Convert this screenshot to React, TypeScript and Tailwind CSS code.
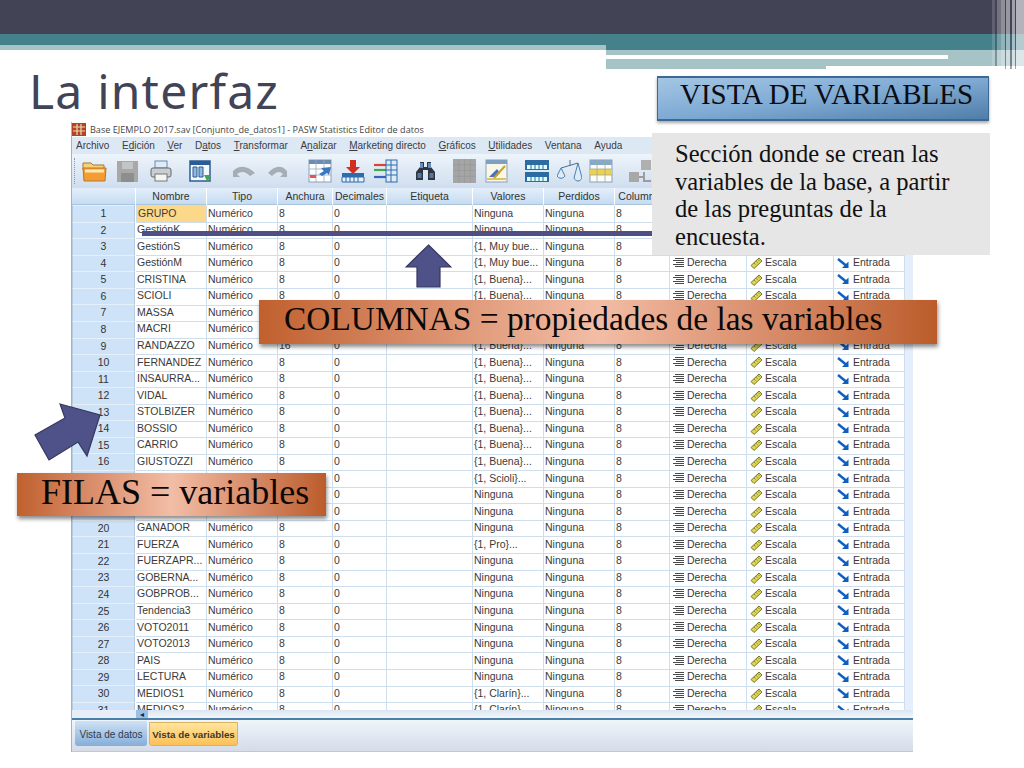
import React from "react";

const names = ["GRUPO","GestiónK","GestiónS","GestiónM","CRISTINA","SCIOLI","MASSA","MACRI","RANDAZZO","FERNANDEZ","INSAURRA...","VIDAL","STOLBIZER","BOSSIO","CARRIO","GIUSTOZZI","","","","GANADOR","FUERZA","FUERZAPR...","GOBERNA...","GOBPROB...","Tendencia3","VOTO2011","VOTO2013","PAIS","LECTURA","MEDIOS1","MEDIOS2"];
const vals = (i: number) => {
  const n = i + 1;
  if (n === 3 || n === 4) return "{1, Muy bue...";
  if (n >= 5 && n <= 16) return "{1, Buena}...";
  if (n === 17) return "{1, Scioli}...";
  if (n === 21) return "{1, Pro}...";
  if (n === 30 || n === 31) return "{1, Clarín}...";
  return "Ninguna";
};
const cols = "grid grid-cols-[64px_71px_71px_55px_54px_86px_71px_71px_55px_77px_87px_71px]";
const cell = "flex items-center pl-[1px] border-r border-b border-[#cfdeec] overflow-hidden whitespace-nowrap";

const AlignIcon = () => (
  <svg width="13" height="10" viewBox="0 0 13 10" className="ml-[1px] mr-[2px] shrink-0">
    <path d="M3 .5h9M1 2.5h11M4 4.5h8M1 6.5h11M3 8.5h9" stroke="#4a4a4a" strokeWidth="1" />
  </svg>
);
const RulerIcon = () => (
  <svg width="13" height="12" viewBox="0 0 13 12" className="mr-[2px] shrink-0">
    <path d="M1 8.5 9 1l3 3-8 7.5z" fill="#e2d255" stroke="#6f7a2a" strokeWidth="1" />
    <path d="M4 6l1.5 1.5M6 4.2l1.5 1.5M8 2.5 9.5 4" stroke="#6f7a2a" strokeWidth=".8" />
  </svg>
);
const RoleIcon = () => (
  <svg width="13" height="11" viewBox="0 0 13 11" className="mr-[3px] shrink-0">
    <path d="M1 1l8 6.5" stroke="#0f5fc0" strokeWidth="2.4" />
    <path d="M11.5 3.5v6.5H5z" fill="#0f5fc0" />
  </svg>
);

const Row = ({ i }: { i: number }) => (
  <div className={`${cols} h-[16.57px] text-[10.5px] text-[#3a3a3a]`}>
    <div className="flex items-center justify-center h-full bg-[#cfe3f8] border border-[#b5cbe0] border-t-[#e6f0fa] mr-[1px] text-[#333]">{i + 1}</div>
    <div className={`${cell} ${i === 0 ? "bg-[#fcd98a] border border-[#5a5aa0]" : ""}`}>{names[i]}</div>
    <div className={cell}>Numérico</div>
    <div className={cell}>{i === 8 ? "16" : "8"}</div>
    <div className={cell}>0</div>
    <div className={cell}></div>
    <div className={cell}>{vals(i)}</div>
    <div className={cell}>Ninguna</div>
    <div className={cell}>8</div>
    <div className={cell}><AlignIcon />Derecha</div>
    <div className={`${cell} pl-[3px]`}><RulerIcon />Escala</div>
    <div className={`${cell} pl-[3px]`}><RoleIcon />Entrada</div>
  </div>
);

const Head = ({ children }: { children?: React.ReactNode }) => (
  <div className="flex items-center justify-center h-[17px] pt-[2px] mr-[1px] border-b border-[#a9c4dd] bg-gradient-to-b from-[#e3eefa] to-[#c6dcf2] text-[10.5px] text-[#333]">{children}</div>
);

const U = ({ children }: { children: React.ReactNode }) => <span className="underline">{children}</span>;

const Stripe = ({ c }: { c: string }) => <div className={c} />;

export default function App() {
  return (
    <div className="relative w-[1024px] h-[768px] overflow-hidden bg-white font-['Liberation_Sans',sans-serif]">
      {/* slide header bands */}
      <div className="h-[34px] bg-[#434356]" />
      <div className="flex h-[35px]">
        <div className="w-[606px]">
          <div className="h-[11px] bg-[#45818a]" />
          <div className="h-[5px] bg-[#a6c3c6]" />
        </div>
        <div className="flex-1">
          <div className="h-[16px] bg-[#45818a]" />
          <div className="h-[5px] bg-[#a6c3c6]" />
          <div className="h-[4px] bg-[#a6c3c6]">
            <div className="h-[4px] w-[342px] bg-white" />
          </div>
          <div className="h-[7px] bg-[#a6c3c6]" />
          <div className="h-[3px] w-[220px] bg-[#a6c3c6]" />
        </div>
      </div>
      <div className="absolute right-0 top-0 h-[69px] w-[32px] flex items-start">
        <Stripe c="w-[3px] h-[66px] bg-white/15" />
        <Stripe c="w-[2px] h-[66px] bg-[#434356]/40" />
        <Stripe c="w-[4px] h-[66px] bg-white/25" />
        <Stripe c="w-[4px] h-[66px] bg-white/40" />
        <Stripe c="w-[1px] h-[69px] bg-[#434356]/50" />
        <Stripe c="w-[4px] h-[69px] bg-white/45" />
        <Stripe c="w-[2px] h-[69px] bg-[#434356]/50" />
        <Stripe c="w-[3px] h-[69px] bg-white/50" />
        <Stripe c="w-[1px] h-[69px] bg-[#434356]/50" />
        <Stripe c="w-[8px] h-[69px] bg-white/60" />
      </div>

      {/* title row */}
      <div className="flex h-[53px] items-start">
        <h1 className="ml-[29px] mt-[-8px] text-[48px] leading-[60px] tracking-[1.2px] text-[#434356] font-['Noto_Sans',sans-serif]">La interfaz</h1>
      </div>

      {/* SPSS window */}
      <div className="ml-[71px] w-[842px] h-[630px] flex flex-col border-l border-[#9db4cc]">
        <div className="flex items-center h-[15px] gap-[4px] text-[9.1px] text-[#444] font-['Open_Sans',sans-serif]">
          <svg width="14" height="13" viewBox="0 0 14 13">
            <rect width="14" height="13" fill="#b8402a" />
            <path d="M1 4h12M1 8h12M5 1v11M9 1v11" stroke="#e6e0a8" strokeWidth="1.2" />
          </svg>
          <span>Base EJEMPLO 2017.sav [Conjunto_de_datos1] - PASW Statistics Editor de datos</span>
        </div>
        <div className="flex items-center h-[17px] pl-[4px] gap-[12.6px] bg-[#dde8f5] text-[10px] text-[#3c3c3c]">
          <span>Archivo</span>
          <span>E<U>d</U>ición</span>
          <span><U>V</U>er</span>
          <span>D<U>a</U>tos</span>
          <span><U>T</U>ransformar</span>
          <span>A<U>n</U>alizar</span>
          <span><U>M</U>arketing directo</span>
          <span><U>G</U>ráficos</span>
          <span><U>U</U>tilidades</span>
          <span>Ventana</span>
          <span>Ayuda</span>
        </div>
        <div className="flex items-center h-[34px] bg-gradient-to-b from-[#eef4fb] to-[#cfdeef]">
          <div className="ml-[2px] w-[2px] h-[26px] border-l border-dotted border-[#8a9aac]" />
          <svg viewBox="0 0 25 22" className="ml-[6px] w-[25px] h-[22px]">
            <path d="M1 3h8l2 2h11v5H1z" fill="#f6d27a" stroke="#a9772a" />
            <path d="M1 8h23l-1 13H2z" fill="#f59c32" stroke="#b9772a" />
            <path d="M3 11h19" stroke="#ffeab0" strokeWidth="3" />
          </svg>
          <svg viewBox="0 0 21 21" className="ml-[10px] w-[21px] h-[21px]">
            <rect width="21" height="21" fill="#a8a8a8" />
            <rect x="5" y="1" width="11" height="7" fill="#c4c4c4" />
            <rect x="4" y="12" width="13" height="9" fill="#8e8e8e" />
          </svg>
          <svg viewBox="0 0 22 22" className="ml-[12px] w-[22px] h-[22px]">
            <rect x="5" y="1" width="12" height="7" fill="#dcecf8" stroke="#6a8aa8" />
            <rect x="1" y="8" width="20" height="9" rx="2" fill="#c9ced4" stroke="#666" />
            <rect x="5" y="14" width="12" height="7" fill="#f5f5f5" stroke="#777" />
          </svg>
          <svg viewBox="0 0 23 23" className="ml-[17px] w-[23px] h-[23px]">
            <rect x="1" y="1" width="20" height="20" fill="#f4f8fc" stroke="#2c5c94" strokeWidth="1.5" />
            <rect x="1" y="1" width="20" height="4" fill="#2c5c94" />
            <path d="M4 7h4v10H4zM10 7h4v10h-4z" fill="#8fb8e0" stroke="#2c5c94" />
            <path d="M15 15h7l-3.5 7z" fill="#3fa84a" />
          </svg>
          <svg viewBox="0 0 25 14" className="ml-[20px] w-[25px] h-[14px]">
            <path d="M1 7c6-6 14-6 22 2l-5 3c-5-5-9-5-13-2l3 3H1z" fill="#a5adb5" />
          </svg>
          <svg viewBox="0 0 21 14" className="ml-[10px] w-[21px] h-[14px]">
            <path d="M20 7C15 1 8 1 1 9l4 3c5-5 8-5 11-2l-3 3h7z" fill="#a5adb5" />
          </svg>
          <svg viewBox="0 0 24 24" className="ml-[20px] w-[24px] h-[24px]">
            <rect x="1" y="1" width="22" height="22" fill="#fff" stroke="#8aa0b8" />
            <rect x="1" y="1" width="22" height="4" fill="#6b8db0" />
            <path d="M1 10h22M1 16h22M8 1v22M16 1v22" stroke="#9ab" strokeWidth=".8" />
            <path d="M23 8l-10 1 3 3-5 3 3 2 5-3 2 2z" fill="#3a78c0" />
            <rect x="2" y="16" width="6" height="3" fill="#e05858" />
          </svg>
          <svg viewBox="0 0 24 24" className="ml-[9px] w-[24px] h-[24px]">
            <path d="M9 1h6v7h4l-7 7-7-7h4z" fill="#d22f20" />
            <rect x="1" y="14" width="22" height="4" fill="#2c6cae" />
            <path d="M1 18h22v5H1zM5 18v5M9 18v5M13 18v5M17 18v5" fill="#e8f0f8" stroke="#2c6cae" />
          </svg>
          <svg viewBox="0 0 25 24" className="ml-[8px] w-[25px] h-[24px]">
            <path d="M1 6h12" stroke="#d8453a" strokeWidth="2.2" />
            <path d="M1 11h12" stroke="#3fa84a" strokeWidth="2.2" />
            <path d="M1 18h12" stroke="#3a60c0" strokeWidth="2.2" />
            <rect x="13" y="1" width="11" height="22" fill="#dfeaf5" stroke="#2c6cae" />
            <path d="M13 6h11M13 11h11M13 16h11M18 1v22" stroke="#2c6cae" />
          </svg>
          <svg viewBox="0 0 21 20" className="ml-[17px] w-[21px] h-[20px]">
            <path d="M5 1h4v5h3V1h4v5l4 5v8h-7V9H8v10H1v-8l4-5z" fill="#2f3540" />
            <path d="M5 2h3v5H5zM13 2h3v5h-3z" fill="#5f8fc0" />
            <path d="M2.500 12h4v5h-4zM14.500 12h4v5h-4z" fill="#4f78a8" />
          </svg>
          <svg viewBox="0 0 24 25" className="ml-[17px] w-[23px] h-[24px]">
            <rect width="24" height="25" fill="#a5a5a5" />
            <path d="M0 6h24M0 12h24M0 18h24M6 0v25M12 0v25M18 0v25" stroke="#989898" strokeWidth=".8" />
          </svg>
          <svg viewBox="0 0 23 24" className="ml-[9px] w-[23px] h-[24px]">
            <rect x="1" y="1" width="21" height="22" fill="#f8f8e8" stroke="#8aa0b8" />
            <rect x="1" y="1" width="21" height="4" fill="#7fa0c0" />
            <path d="M4 18 12 10l3 4-4 4z" fill="#4a70c0" />
            <path d="M9 19 20 7" stroke="#c8a030" strokeWidth="2" />
            <path d="M2 20h19" stroke="#d8b030" strokeWidth="1.5" />
          </svg>
          <svg viewBox="0 0 24 24" className="ml-[17px] w-[24px] h-[24px]">
            <rect x="0" y="1" width="24" height="10" fill="#2c6ca0" />
            <rect x="0" y="13" width="24" height="10" fill="#2c6ca0" />
            <path d="M2 6h20v4H2zM2 18h20v4H2z" fill="#dff" />
            <path d="M6 6v4M10 6v4M14 6v4M18 6v4M6 18v4M10 18v4M14 18v4M18 18v4" stroke="#2c6ca0" />
          </svg>
          <svg viewBox="0 0 25 24" className="ml-[8px] w-[25px] h-[24px]">
            <path d="M4 9 21 4M13 1v6" stroke="#4a7090" />
            <path d="M4 9 0 17c2 3 6 3 8 0zM21 4l-4 15c2 4 6 4 8 0z" fill="#dcebf7" stroke="#4a80b0" />
          </svg>
          <svg viewBox="0 0 24 24" className="ml-[7px] w-[24px] h-[24px]">
            <rect x="1" y="1" width="22" height="22" fill="#fdfdf8" stroke="#88a0b8" />
            <rect x="1" y="1" width="22" height="5" fill="#88a8c8" />
            <rect x="1" y="10" width="22" height="6" fill="#ecd24a" />
            <path d="M1 10h22M1 16h22M8 1v22M16 1v22" stroke="#a0a8a0" strokeWidth=".8" />
          </svg>
          <svg viewBox="0 0 24 24" className="ml-[15px] w-[24px] h-[24px]">
            <rect x="13" y="1" width="10" height="10" fill="#b0b0b0" />
            <rect x="1" y="13" width="10" height="10" fill="#a8a8a8" />
            <path d="M11 18h5M16 13v9h7" stroke="#9c9c9c" strokeWidth="2" fill="none" />
          </svg>
        </div>

        {/* variable grid */}
        <div className="flex-1 flex min-h-0">
          <div className="w-[834px] flex flex-col overflow-hidden">
            <div className={`${cols} shrink-0`}>
              <Head />
              <Head>Nombre</Head>
              <Head>Tipo</Head>
              <Head>Anchura</Head>
              <Head>Decimales</Head>
              <Head>Etiqueta</Head>
              <Head>Valores</Head>
              <Head>Perdidos</Head>
              <Head>Columnas</Head>
              <Head>Alineación</Head>
              <Head>Medida</Head>
              <Head>Rol</Head>
            </div>
            <div className="h-[505px] shrink-0 overflow-hidden">
              {names.map((_, i) => <Row key={i} i={i} />)}
            </div>
            <div className="h-[10px] shrink-0 flex bg-gradient-to-b from-[#dbe5f0] to-[#f4f7fb] border-b-2 border-[#4a7fa8]">
              <div className="w-[64px] bg-[#e6eff9]" />
              <div className="w-[12px] bg-[#9cc0e4] text-[8px] leading-[9px] text-center text-[#224]">◂</div>
            </div>
            <div className="flex-1 flex items-start gap-[2px] pl-[3px] bg-gradient-to-b from-[#f0f5fb] to-[#d5dce8] border-b border-[#c8c8c8]">
              <div className="mt-[1px] pt-[2px] w-[72px] h-[25px] flex items-center justify-center rounded-b-[3px] bg-gradient-to-b from-[#cfe2f5] to-[#85add8] text-[10px] text-[#2c3c50] whitespace-nowrap">Vista de datos</div>
              <div className="mt-[2px] pt-[3px] w-[89px] h-[24px] flex items-center justify-center rounded-b-[3px] bg-gradient-to-b from-[#ffe49a] to-[#fcc057] border border-[#d9b263] text-[9.8px] font-bold text-[#40382a] whitespace-nowrap">Vista de variables</div>
            </div>
          </div>
          <div className="w-[8px] flex flex-col">
            <div className="h-[522px] bg-[#e4effb]" />
            <div className="h-[10px] bg-gradient-to-b from-[#dbe5f0] to-[#f4f7fb] border-b-2 border-[#4a7fa8]" />
            <div className="flex-1 bg-gradient-to-b from-[#f0f5fb] to-[#d5dce8] border-b border-[#c8c8c8]" />
          </div>
        </div>
      </div>

      {/* overlaid slide shapes */}
      <div className="absolute left-[142px] top-[231px] h-[5px] w-[510px] bg-[#4f4f85]" />
      <div className="absolute left-[657px] top-[76px] w-[332px] h-[45px] border-y-2 border-x border-[#3d6a94] bg-gradient-to-br from-[#a4c6e4] via-[#7faad4] to-[#4f7ea8] shadow-[0_2px_3px_rgba(0,0,0,0.35)] pl-[22px] text-[29px] leading-[33px] text-[#0c0c14] font-['Liberation_Serif',serif] whitespace-nowrap">VISTA DE VARIABLES</div>
      <div className="absolute left-[652px] top-[133px] w-[338px] h-[122px] bg-[#e6e6e6] pl-[23px] pt-[7px] text-[24.6px] leading-[27.5px] text-[#111] font-['Liberation_Serif',serif] whitespace-nowrap">
        Sección donde se crean las<br />variables de la base, a partir<br />de las preguntas de la<br />encuesta.
      </div>
      <svg viewBox="0 0 47 44" className="absolute left-[405px] top-[244px] w-[47px] h-[44px]">
        <path d="M23.5 1 46 23H35v20H12V23H1z" fill="#4f5288" stroke="#35375e" strokeWidth="1.2" />
      </svg>
      <svg viewBox="0 0 68 58" className="absolute left-[34px] top-[403px] w-[68px] h-[58px]">
        <path d="M26 1 66 12 53 53 44 39 15 57 1 32 31 15z" fill="#4f5288" stroke="#35375e" strokeWidth="1.2" />
      </svg>
      <div className="absolute left-[259px] top-[300px] w-[678px] h-[44px] pl-[25px] bg-gradient-to-r from-[#c0602d] via-[#f2bda6] to-[#bb5c2a] shadow-[1px_3px_4px_rgba(0,0,0,0.45)] text-[33.4px] leading-[37px] text-[#0c0806] font-['Liberation_Serif',serif] whitespace-nowrap">COLUMNAS = propiedades de las variables</div>
      <div className="absolute left-[17px] top-[473px] w-[309px] h-[43px] pl-[24px] bg-gradient-to-r from-[#c0602d] via-[#f2bda6] to-[#bb5c2a] shadow-[1px_3px_4px_rgba(0,0,0,0.45)] text-[36px] leading-[38px] text-[#0c0806] font-['Liberation_Serif',serif] whitespace-nowrap">FILAS = variables</div>
    </div>
  );
}
